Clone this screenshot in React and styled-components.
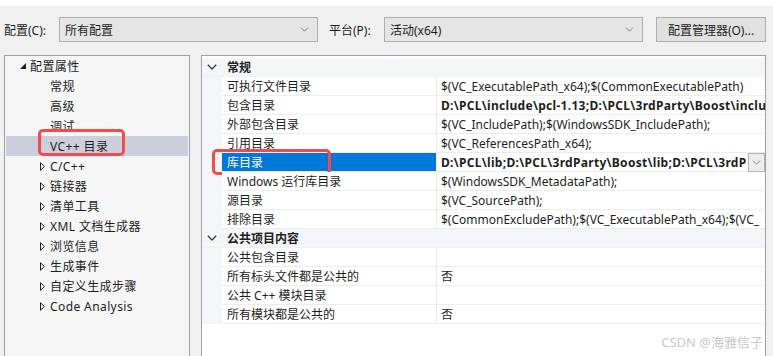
import styled, { createGlobalStyle } from 'styled-components';

const GlobalStyle = createGlobalStyle`
	html, body {
		margin: 0;
		padding: 0;
		background: #ffffff;
	}
	* {
		box-sizing: border-box;
	}
`;

const treeItems = [
	{ label: '配置属性', level: 0, arrow: 'open' },
	{ label: '常规', level: 1 },
	{ label: '高级', level: 1 },
	{ label: '调试', level: 1 },
	{ label: 'VC++ 目录', level: 1, selected: true, marked: true },
	{ label: 'C/C++', level: 1, arrow: 'closed' },
	{ label: '链接器', level: 1, arrow: 'closed' },
	{ label: '清单工具', level: 1, arrow: 'closed' },
	{ label: 'XML 文档生成器', level: 1, arrow: 'closed' },
	{ label: '浏览信息', level: 1, arrow: 'closed' },
	{ label: '生成事件', level: 1, arrow: 'closed' },
	{ label: '自定义生成步骤', level: 1, arrow: 'closed' },
	{ label: 'Code Analysis', level: 1, arrow: 'closed' },
];

const groups = [
	{
		title: '常规',
		rows: [
			{ name: '可执行文件目录', value: '$(VC_ExecutablePath_x64);$(CommonExecutablePath)' },
			{ name: '包含目录', value: 'D:\\PCL\\include\\pcl-1.13;D:\\PCL\\3rdParty\\Boost\\inclu', bold: true },
			{ name: '外部包含目录', value: '$(VC_IncludePath);$(WindowsSDK_IncludePath);' },
			{ name: '引用目录', value: '$(VC_ReferencesPath_x64);' },
			{ name: '库目录', value: 'D:\\PCL\\lib;D:\\PCL\\3rdParty\\Boost\\lib;D:\\PCL\\3rdP', bold: true, selected: true },
			{ name: 'Windows 运行库目录', value: '$(WindowsSDK_MetadataPath);' },
			{ name: '源目录', value: '$(VC_SourcePath);' },
			{ name: '排除目录', value: '$(CommonExcludePath);$(VC_ExecutablePath_x64);$(VC_' },
		],
	},
	{
		title: '公共项目内容',
		rows: [
			{ name: '公共包含目录', value: '' },
			{ name: '所有标头文件都是公共的', value: '否' },
			{ name: '公共 C++ 模块目录', value: '' },
			{ name: '所有模块都是公共的', value: '否' },
		],
	},
];

const Chevron = ({ size = 9, color = '#6d6d6d', width = 1 }) => (
	<svg width={size} height={Math.round(size * 0.6)} viewBox="0 0 10 6">
		<path d="M0.8 0.8 L5 5 L9.2 0.8" fill="none" stroke={color} strokeWidth={width} />
	</svg>
);

const TreeArrow = ({ type }) => {
	if (type === 'open') {
		return (
			<svg width="6" height="6" viewBox="0 0 6 6">
				<path d="M6 0 L6 6 L0 6 Z" fill="#1e1e1e" />
			</svg>
		);
	}
	return (
		<svg width="5" height="9" viewBox="0 0 5 9">
			<path d="M0.5 0.7 L4.4 4.5 L0.5 8.3 Z" fill="none" stroke="#1e1e1e" strokeWidth="1" />
		</svg>
	);
};

const App = () => {
	return (
		<>
			<GlobalStyle />
			<Page>
				<Dialog>
					<Toolbar>
						<FieldLabel>配置(C):</FieldLabel>
						<Select>
							<span>所有配置</span>
							<Chevron />
						</Select>
						<FieldLabel $gap>平台(P):</FieldLabel>
						<Select>
							<span>活动(x64)</span>
							<Chevron />
						</Select>
						<ManagerButton>配置管理器(O)...</ManagerButton>
					</Toolbar>
					<Panels>
						<TreePanel>
							{treeItems.map((item) => (
								<TreeRow key={item.label} $level={item.level} $selected={item.selected}>
									<ArrowSlot>{item.arrow && <TreeArrow type={item.arrow} />}</ArrowSlot>
									<TreeLabel>
										{item.label}
										{item.marked && <Marker $l={-12} $t={-8} $w={87} $h={27} />}
									</TreeLabel>
								</TreeRow>
							))}
						</TreePanel>
						<GridPanel>
							{groups.map((group) => (
								<div key={group.title}>
									<GroupHeader>
										<Gutter>
											<Chevron size={10} color="#3c3c3c" width={1.3} />
										</Gutter>
										<GroupTitle>{group.title}</GroupTitle>
									</GroupHeader>
									{group.rows.map((row) => (
										<PropRow key={row.name}>
											<Gutter />
											<NameCell $selected={row.selected}>
												{row.name}
												{row.selected && <Marker $l={-10} $t={-4} $w={119} $h={26} />}
											</NameCell>
											<ValueCell $bold={row.bold}>
												<ValueText>{row.value}</ValueText>
												{row.selected && (
													<DropButton>
														<Chevron size={9} color="#6d6d6d" />
													</DropButton>
												)}
											</ValueCell>
										</PropRow>
									))}
								</div>
							))}
							<Watermark>CSDN @海雅信子</Watermark>
						</GridPanel>
					</Panels>
				</Dialog>
			</Page>
		</>
	);
};

export default App;

const Page = styled.div`
	width: 773px;
	height: 356px;
	padding-top: 6px;
	overflow: hidden;
	background: #ffffff;
	font-family: 'Noto Sans', 'Noto Sans CJK SC', sans-serif;
	font-size: 12px;
	color: #1e1e1e;
`;

const Dialog = styled.div`
	display: flex;
	flex-direction: column;
	height: 100%;
	background: #f0f0f0;
	padding: 11px 7px 0 4px;
`;

const Toolbar = styled.div`
	display: flex;
	align-items: center;
	height: 25px;
`;

const FieldLabel = styled.span`
	width: 55px;
	margin-left: ${(p) => (p.$gap ? '11px' : '0')};
	white-space: nowrap;
`;

const Select = styled.div`
	display: flex;
	align-items: center;
	justify-content: space-between;
	width: 259px;
	height: 25px;
	padding: 0 8px 0 5px;
	background: #e5e5e5;
	border: 1px solid #adadad;
	white-space: nowrap;
`;

const ManagerButton = styled.button`
	width: 110px;
	height: 25px;
	margin-left: 13px;
	padding: 0;
	background: #e1e1e1;
	border: 1px solid #adadad;
	font: inherit;
	color: #1e1e1e;
`;

const Panels = styled.div`
	flex: 1;
	display: flex;
	gap: 11px;
	margin-top: 13px;
	min-width: 0;
`;

const TreePanel = styled.div`
	width: 186px;
	flex-shrink: 0;
	background: #f5f5f5;
	border: 1px solid #a0a0a0;
	border-bottom: none;
`;

const TreeRow = styled.div`
	display: flex;
	align-items: center;
	height: 20px;
	margin: 0 1px;
	padding-left: ${(p) => 10 + p.$level * 20}px;
	background: ${(p) => (p.$selected ? '#cccedb' : 'transparent')};
	white-space: nowrap;
`;

const ArrowSlot = styled.span`
	display: flex;
	align-items: center;
	width: 14px;
	padding-left: 4px;
`;

const TreeLabel = styled.span`
	position: relative;
	letter-spacing: 0.4px;
`;

const Marker = styled.span`
	position: absolute;
	left: ${(p) => p.$l}px;
	top: ${(p) => p.$t}px;
	width: ${(p) => p.$w}px;
	height: ${(p) => p.$h}px;
	border: 3px solid #f24b4b;
	border-radius: 5px;
	pointer-events: none;
`;

const GridPanel = styled.div`
	position: relative;
	flex: 1;
	min-width: 0;
	background: #ffffff;
	border: 1px solid #a0a0a0;
	border-bottom: none;
	padding-top: 2px;
`;

const GroupHeader = styled.div`
	display: flex;
	height: 19px;
	background: #f3f5f9;
	border-bottom: 1px solid #f0f0f0;
`;

const Gutter = styled.div`
	display: flex;
	align-items: center;
	justify-content: center;
	width: 20px;
	flex-shrink: 0;
	background: #f3f5f9;
`;

const GroupTitle = styled.div`
	display: flex;
	align-items: center;
	padding-left: 5px;
	font-weight: bold;
`;

const PropRow = styled.div`
	display: flex;
	height: 19px;
`;

const NameCell = styled.div`
	position: relative;
	display: flex;
	align-items: center;
	width: 215px;
	flex-shrink: 0;
	padding-left: 5px;
	background: ${(p) => (p.$selected ? '#0078d7' : '#ffffff')};
	color: ${(p) => (p.$selected ? '#ffffff' : '#1e1e1e')};
	border-right: 1px solid #ececec;
	border-bottom: 1px solid #ececec;
	white-space: nowrap;
`;

const ValueCell = styled.div`
	display: flex;
	align-items: center;
	flex: 1;
	min-width: 0;
	padding-left: 4px;
	border-bottom: 1px solid #ececec;
	font-weight: ${(p) => (p.$bold ? 'bold' : 'normal')};
	letter-spacing: ${(p) => (p.$bold ? '0.3px' : '0')};
`;

const ValueText = styled.span`
	flex: 1;
	min-width: 0;
	overflow: hidden;
	white-space: nowrap;
`;

const DropButton = styled.span`
	display: flex;
	align-items: center;
	justify-content: center;
	width: 17px;
	height: 19px;
	flex-shrink: 0;
	background: #ededed;
	border: 1px solid #b4b4b4;
`;

const Watermark = styled.div`
	position: absolute;
	right: 2px;
	bottom: 5px;
	font-size: 13px;
	color: #c8c8c8;
	white-space: nowrap;
`;
